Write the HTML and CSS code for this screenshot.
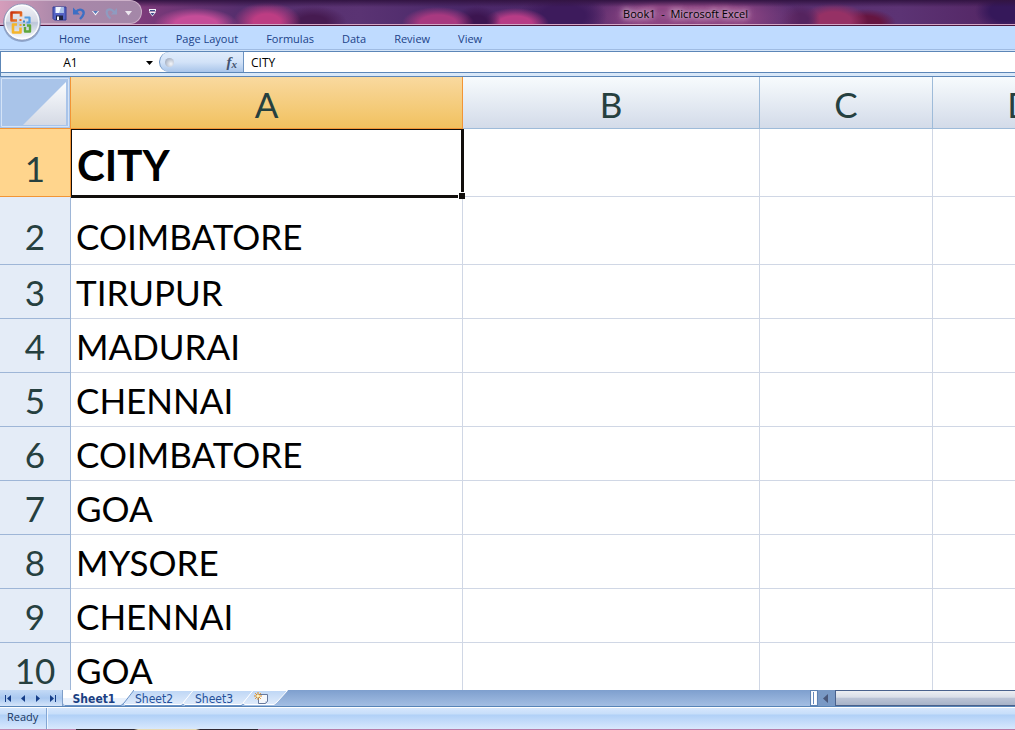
FILE: index.html
```html
<!DOCTYPE html>
<html lang="en">
<head>
<meta charset="utf-8">
<title>Book1 - Microsoft Excel</title>
<link rel="stylesheet" href="styles.css">
</head>
<body>
<div class="app">
  <header class="titlebar">
    <button class="office" aria-label="Office Button">
      <svg viewBox="0 0 44 44" width="44" height="44">
        <defs>
          <linearGradient id="orb" x1="0" y1="0" x2="0" y2="1">
            <stop offset="0" stop-color="#f4f5f9"/><stop offset=".48" stop-color="#d5d9e5"/>
            <stop offset=".52" stop-color="#bcc6d9"/><stop offset="1" stop-color="#ffffff"/>
          </linearGradient>
          <linearGradient id="or" x1="0" y1="0" x2="1" y2="1"><stop offset="0" stop-color="#c93210"/><stop offset="1" stop-color="#f48a2c"/></linearGradient>
        </defs>
        <circle cx="22" cy="23" r="19" fill="#60719a" opacity=".5"/>
        <circle cx="22" cy="22" r="18" fill="url(#orb)" stroke="#8c97b8"/>
        <circle cx="22" cy="22" r="16.800" fill="none" stroke="#fff" stroke-width="1.500" opacity=".8"/>
        <g fill="none" stroke-width="2.600" stroke-linejoin="round">
          <path d="M17 20.500h-5.500v-8h9.500v4" stroke="url(#or)"/>
          <path d="M24.500 17.500h5v5h-3" stroke="#4f9be0" stroke-width="2.200"/>
          <path d="M17 24.500h-4v8h7.500v-5" stroke="#f5b52c"/>
          <path d="M25 27v4.500h5v-6h-3" stroke="#5fa73c" stroke-width="2.400"/>
        </g>
        <path d="M19.500 19h2v2h-2z" fill="#ed6a20"/><path d="M23 20.500h2v2h-2z" fill="#3d88d4"/>
        <path d="M19.500 24h2v2h-2z" fill="#f5a820"/><path d="M23 24h2v2h-2z" fill="#5fa73c"/>
      </svg>
    </button>
    <div class="quick">
      <button aria-label="Save">
        <svg width="15" height="15" viewBox="0 0 15 15"><path d="M1 1h13v13H2.500L1 12.500z" fill="#5563c4" stroke="#333f95"/><path d="M3.500 1h8v6h-8z" fill="#f1f6ff"/><path d="M9 1h2.500v6H7z" fill="#a9c0e8"/><path d="M4 9.500h7V14H4z" fill="#1f2340"/><path d="M5 10.500h2V14H5z" fill="#fff"/></svg>
      </button>
      <button aria-label="Undo">
        <svg width="15" height="15" viewBox="0 0 15 15"><path d="M5 6C8 2 13.500 3.500 12.500 8c-.5 2-2 3.500-3.500 5" fill="none" stroke="#3c6fc4" stroke-width="2.400"/><path d="M2 1.500V8.500h7z" fill="#3c6fc4"/></svg>
      </button>
      <button class="drop" aria-label="Undo list"><svg width="7" height="5" viewBox="0 0 7 5"><path d="M0 0h7L3.500 4.500z" fill="#fff"/><path d="M1 0h5L3.500 3z" fill="#5777b8"/></svg></button>
      <button aria-label="Redo">
        <svg width="15" height="15" viewBox="0 0 15 15"><path d="M10 6C6.500 1.500 1.500 3.500 3 8c.5 2 2 3.500 3.500 4.500" fill="none" stroke="#8f9bc0" stroke-width="2.200"/><path d="M13 2v6.500H7z" fill="#8f9bc0"/></svg>
      </button>
      <button class="drop" aria-label="Redo list"><svg width="7" height="5" viewBox="0 0 7 5"><path d="M0 0h7L3.500 4.500z" fill="#ece6ee"/></svg></button>
    </div>
    <button class="customize" aria-label="Customize Quick Access Toolbar"><svg width="7" height="8" viewBox="0 0 7 8"><path d="M0 0h7v2.500H0zM0 3h7L3.500 7.500z" fill="#f3f3fa"/><path d="M1 1h5v1H1zM1.500 4h4l-2 2.500z" fill="#3d4d88"/></svg></button>
    <h1 class="title"><span>Book1&nbsp; -&nbsp; Microsoft Excel</span></h1>
  </header>

  <nav class="ribbon" aria-label="Ribbon">
    <button>Home</button><button>Insert</button><button>Page Layout</button><button>Formulas</button><button>Data</button><button>Review</button><button>View</button>
  </nav>

  <div class="formula">
    <input class="namebox" aria-label="Name Box" value="A1">
    <button class="namedrop" aria-label="Named ranges"><svg width="7" height="4" viewBox="0 0 7 4"><path d="M0 0h7L3.500 4z" fill="#000"/></svg></button>
    <div class="fx"><i class="knob"></i><button aria-label="Insert Function">f<sub>x</sub></button></div>
    <input class="content" aria-label="Formula Bar" value="CITY">
  </div>

  <main class="sheet">
    <table>
      <colgroup><col class="c-head"><col class="c-a"><col class="c-b"><col class="c-c"><col class="c-d"></colgroup>
      <thead><tr>
        <th class="corner"><svg viewBox="0 0 70 51" width="70" height="51"><defs><linearGradient id="tri" x1="0" y1="0" x2="0" y2="1"><stop offset="0" stop-color="#fafcfe"/><stop offset="1" stop-color="#d5dae5"/></linearGradient></defs><path d="M1.500 49.500v-48h67v48z" fill="#a9c4e9" stroke="#d4e3f7"/><path d="M66 5v43H23z" fill="url(#tri)"/></svg></th>
        <th class="active" scope="col">A</th><th scope="col">B</th><th scope="col">C</th><th scope="col">D</th>
      </tr></thead>
      <tbody>
        <tr class="tall"><th class="active" scope="row">1</th><td class="selected">CITY</td><td></td><td></td><td></td></tr>
        <tr class="tall"><th scope="row">2</th><td>COIMBATORE</td><td></td><td></td><td></td></tr>
        <tr><th scope="row">3</th><td>TIRUPUR</td><td></td><td></td><td></td></tr>
        <tr><th scope="row">4</th><td>MADURAI</td><td></td><td></td><td></td></tr>
        <tr><th scope="row">5</th><td>CHENNAI</td><td></td><td></td><td></td></tr>
        <tr><th scope="row">6</th><td>COIMBATORE</td><td></td><td></td><td></td></tr>
        <tr><th scope="row">7</th><td>GOA</td><td></td><td></td><td></td></tr>
        <tr><th scope="row">8</th><td>MYSORE</td><td></td><td></td><td></td></tr>
        <tr><th scope="row">9</th><td>CHENNAI</td><td></td><td></td><td></td></tr>
        <tr><th scope="row">10</th><td>GOA</td><td></td><td></td><td></td></tr>
      </tbody>
    </table>
  </main>

  <div class="tabs">
    <div class="nav">
      <button aria-label="First sheet"><svg width="7" height="7" viewBox="0 0 7 7"><path d="M0 0h1v7H0zM6 0v7L2 3.500z"/></svg></button>
      <button aria-label="Previous sheet"><svg width="7" height="7" viewBox="0 0 7 7"><path d="M5 0v7L1 3.500z"/></svg></button>
      <button aria-label="Next sheet"><svg width="7" height="7" viewBox="0 0 7 7"><path d="M2 0v7l4-3.500z"/></svg></button>
      <button aria-label="Last sheet"><svg width="7" height="7" viewBox="0 0 7 7"><path d="M1 0v7l4-3.500zM6 0h1v7H6z"/></svg></button>
    </div>
    <button class="tab current"><svg class="shape" viewBox="0 0 71 16" preserveAspectRatio="none"><path d="M0 0h71L61 13l-3 2H2L0 13z" fill="#fff"/><path d="M0 8h65l-4 5-3 2H2L0 13z" fill="#e9f1fc"/><path d="M71 0L61 13l-3 2.500H2" fill="none" stroke="#6b92c6"/></svg><span>Sheet1</span></button>
    <button class="tab"><svg class="shape" viewBox="0 0 71 16" preserveAspectRatio="none"><defs><linearGradient id="tb" x1="0" y1="0" x2="0" y2="1"><stop offset="0" stop-color="#bed6f5"/><stop offset="1" stop-color="#dfebfb"/></linearGradient></defs><path d="M10 .5h60.500L61 12l-3 2.500H2L0 13z" fill="url(#tb)" stroke="#fff"/><path d="M71 1L61.500 13 59 15.500H2" fill="none" stroke="#6b92c6"/></svg><span>Sheet2</span></button>
    <button class="tab"><svg class="shape" viewBox="0 0 71 16" preserveAspectRatio="none"><path d="M10 .5h60.500L61 12l-3 2.500H2L0 13z" fill="url(#tb)" stroke="#fff"/><path d="M71 1L61.500 13 59 15.500H2" fill="none" stroke="#6b92c6"/></svg><span>Sheet3</span></button>
    <button class="tab new" aria-label="Insert Worksheet"><svg class="shape" viewBox="0 0 45 16" preserveAspectRatio="none"><path d="M10 .5h34.500L34 12l-3 2.500H2L0 13z" fill="url(#tb)" stroke="#fff"/></svg><svg class="newicon" width="15" height="13" viewBox="0 0 15 13"><path d="M4.500 2.500h9v7l-2 2h-7z" fill="#f4f7fc" stroke="#66789c"/><path d="M13.500 9.500h-2v2z" fill="#8092b5"/><path d="M4 0v8M0 4h8M1.200 1.200l5.600 5.600M6.800 1.200L1.200 6.800" stroke="#dc8b1f"/><circle cx="4" cy="4" r="1.500" fill="#fff4c0"/></svg></button>
    <div class="track"></div>
    <div class="split"></div>
    <button class="scrollbtn" aria-label="Scroll left"><svg width="5" height="9" viewBox="0 0 5 9"><path d="M5 0v9L0 4.500z" fill="#4a587a"/></svg></button>
    <div class="thumb"></div>
  </div>

  <footer class="status"><span>Ready</span></footer>
  <div class="taskbar"></div>
</div>
</body>
</html>
```
FILE: styles.css
```css
* { box-sizing: border-box; }
body { margin: 0; overflow: hidden; font-family: "Open Sans", "Noto Sans", sans-serif; font-size: 11px; }
button { border: 0; padding: 0; background: none; font: inherit; color: inherit; }
svg { display: block; }
.app { display: flex; flex-direction: column; height: 100vh; }

.titlebar {
  position: relative; display: flex; flex: none; height: 26px;
  border-bottom: 1px solid #4b183f; box-shadow: inset 0 -1px #d3a6c6;
  background:
    linear-gradient(#321442 0, #32144200 7px),
    radial-gradient(ellipse 42px 16px at 196px 24px, #c54d98 50%, #c54d9800),
    radial-gradient(ellipse 34px 20px at 267px 22px, #bd3d83 40%, #bd3d8300),
    radial-gradient(ellipse 34px 16px at 313px 22px, #461b51 40%, #461b5100),
    radial-gradient(ellipse 36px 16px at 438px 23px, #a83980 50%, #a8398000),
    radial-gradient(ellipse 24px 16px at 477px 22px, #3c1550 40%, #3c155000),
    radial-gradient(ellipse 34px 16px at 515px 24px, #b73c86 50%, #b73c8600),
    radial-gradient(ellipse 44px 22px at 563px 16px, #3d1b5c 50%, #3d1b5c00),
    radial-gradient(ellipse 110px 34px at 690px 18px, #8d4583 50%, #8d458300),
    radial-gradient(ellipse 20px 16px at 800px 20px, #55245f 40%, #55245f00),
    radial-gradient(ellipse 34px 18px at 834px 21px, #963165 50%, #96316500),
    radial-gradient(ellipse 30px 14px at 866px 23px, #651540 50%, #65154000),
    radial-gradient(ellipse 30px 20px at 1005px 11px, #35185a 50%, #35185a00),
    linear-gradient(90deg, #a26d9b, #7e3b7b 140px, #552e6d 240px, #5a3373 360px, #4a2869 460px, #502768 620px, #5c3374 900px, #522462);
}
.office { position: absolute; left: 0; top: 0; z-index: 2; }
.quick {
  display: flex; align-items: center; gap: 4px; width: 142px; height: 24px; padding: 2px 0 0 52px;
  background: linear-gradient(90deg, #d59dbb, #a887a9 60px, #a487a8);
  border: 1px solid #cdb1c9; border-left: 0; border-radius: 0 12px 12px 0;
}
.quick .drop { width: 10px; padding-left: 2px; }
.customize { padding: 0 7px; }
.title { flex: 1; margin: 0; padding: 4px 0 0 193px; text-align: center; font-size: 11px; line-height: 20px; font-weight: 400; color: #000; white-space: nowrap; }
.title span { text-shadow: 0 0 5px #e4c9de, 0 0 7px #e4c9de, 0 0 9px #d7b3d0; }

.ribbon {
  display: flex; flex: none; height: 25px; padding-left: 45px; background: #bfdbff;
  border-bottom: 1px solid #d5e5f8; box-shadow: inset 0 -1px #9fbbe2; color: #1c4389;
}
.ribbon button { padding: 0 14px; }

.formula { display: flex; flex: none; height: 26px; border-top: 1px solid #5c86b7; border-bottom: 1px solid #5c86b7; border-left: 1px solid #5c86b7; background: #fff linear-gradient(#5c86b7, #5c86b7) 0 20px / 100% 1px no-repeat; box-shadow: inset 0 -3px #d9e8f8; }
.formula input { border: 0; outline: 0; padding: 0; background: none; font: inherit; font-size: 12px; height: 20px; color: #000; }
.formula .namebox { width: 139px; text-align: center; }
.namedrop { width: 19px; height: 22px; padding-left: 6px; }
.fx { display: flex; align-items: center; justify-content: space-between; width: 85px; height: 20px; padding: 0 6px 0 5px; border: 1px solid #6d93c2; border-width: 0 1px 0 1px; border-radius: 11px 0 0 11px; background: linear-gradient(#e0ecfb, #d3e3f8 50%, #a9c5ea); }
.knob { width: 9px; height: 9px; border-radius: 50%; background: radial-gradient(circle at 65% 65%, #f4f6fa, #8c99b0); }
.fx button { font: italic bold 15px/18px "Liberation Serif", serif; color: #44536f; }
.fx sub { font-size: 11px; line-height: 0; vertical-align: -1px; }
.formula .content { flex: 1; min-width: 0; padding-left: 7px; }

.sheet { flex: 1; min-height: 0; overflow: hidden; background: #fff; font-family: Lato, "Open Sans", sans-serif; }
table { table-layout: fixed; width: 1109px; border-collapse: separate; border-spacing: 0; }
.c-head { width: 71px; } .c-a { width: 392px; } .c-b { width: 297px; } .c-c { width: 173px; } .c-d { width: 176px; }
th, td { padding: 0; height: 54px; border-right: 1px solid #d0d7e5; border-bottom: 1px solid #d0d7e5; font-size: 35px; line-height: 36px; font-weight: 400; vertical-align: bottom; }
td { padding: 0 0 8px 5px; color: #000; }
th { color: #26403f; border-color: #9eb6ce; }
thead th { height: 52px; vertical-align: middle; padding-top: 2px; background: linear-gradient(#f7fbfd, #d3dbe9); border-color: #9ebbd9; }
tbody th { padding-bottom: 8px; background: #e4ecf7; border-color: #9eb6d7; }
.tall th, .tall td { height: 68px; padding-bottom: 10px; }
thead th.active { background: linear-gradient(#f9d99f, #f1c15f); border-color: #f29536; }
tbody th.active { background: #ffd58d; border-color: #f29536; }
thead .corner { padding: 0; border-bottom-color: #f29536; border-right-color: #f29536; background: #a9c4e9; }
.tall td.selected { position: relative; padding-left: 6px; font-size: 42px; line-height: 42px; font-weight: 700; }
.selected::before { content: ""; position: absolute; inset: 0 -2px -2px 0; border: solid #120f0c; border-width: 1px 3px 3px 1px; }
.selected::after { content: ""; position: absolute; right: -3px; bottom: -3px; width: 6px; height: 6px; background: #120f0c; border: solid #fff; border-width: 1px 0 0 1px; }

.tabs { display: flex; flex: none; height: 17px; border-bottom: 1px solid #5784b7; background: linear-gradient(#7e9fce, #a3bee3); font-family: "DejaVu Sans Condensed", "DejaVu Sans", sans-serif; font-size: 12px; }
.nav { display: flex; align-items: center; justify-content: space-between; width: 63px; padding: 0 6px 0 5px; background: linear-gradient(#c4daf6, #a9c8f0 50%, #d5e5fa); border-right: 1px solid #7f9fc9; fill: #153d88; }
.tab { position: relative; width: 71px; margin-right: -11px; padding-right: 9px; color: #24509a; }
.tab span { position: relative; display: block; padding-top: 1px; line-height: 16px; }
.current { z-index: 1; font-weight: 700; color: #1b3f82; }
.shape { position: absolute; left: 0; top: 0; width: 100%; height: 100%; }
.new { width: 45px; padding: 0 0 0 11px; }
.newicon { position: relative; }
.track { flex: 1; min-width: 20px; }
.split { width: 8px; border: 2px solid #f3f7fd; outline: 1px solid #5d82b2; outline-offset: -1px; background: linear-gradient(90deg, #fff 1px, #6488bb 1px 2px, #fff 2px); }
.scrollbtn { width: 17px; padding-left: 5px; background: #7999c5; }
.thumb { width: 180px; border: 1px solid #49618c; border-right: 0; background: linear-gradient(#eceef2, #d8dde7 45%, #bbc4d6 50%, #a8b3c8); }

.status { display: flex; flex: none; height: 22px; border-top: 1px solid #fff; background: linear-gradient(#d5e6fc, #c7defa 6px, #b0d0f7 7px, #d8e8fd); color: #17365f; }
.status span { padding: 0 8px 0 7px; line-height: 18px; border-right: 1px solid #83a6d4; box-shadow: 1px 0 #edf5ff; }
.taskbar { flex: none; height: 1px; background: linear-gradient(90deg, #c28ab3 76px, #302832 76px 134px, #e6d9b3 138px 196px, #302832 200px 258px, #b77ba8 258px); }
```
